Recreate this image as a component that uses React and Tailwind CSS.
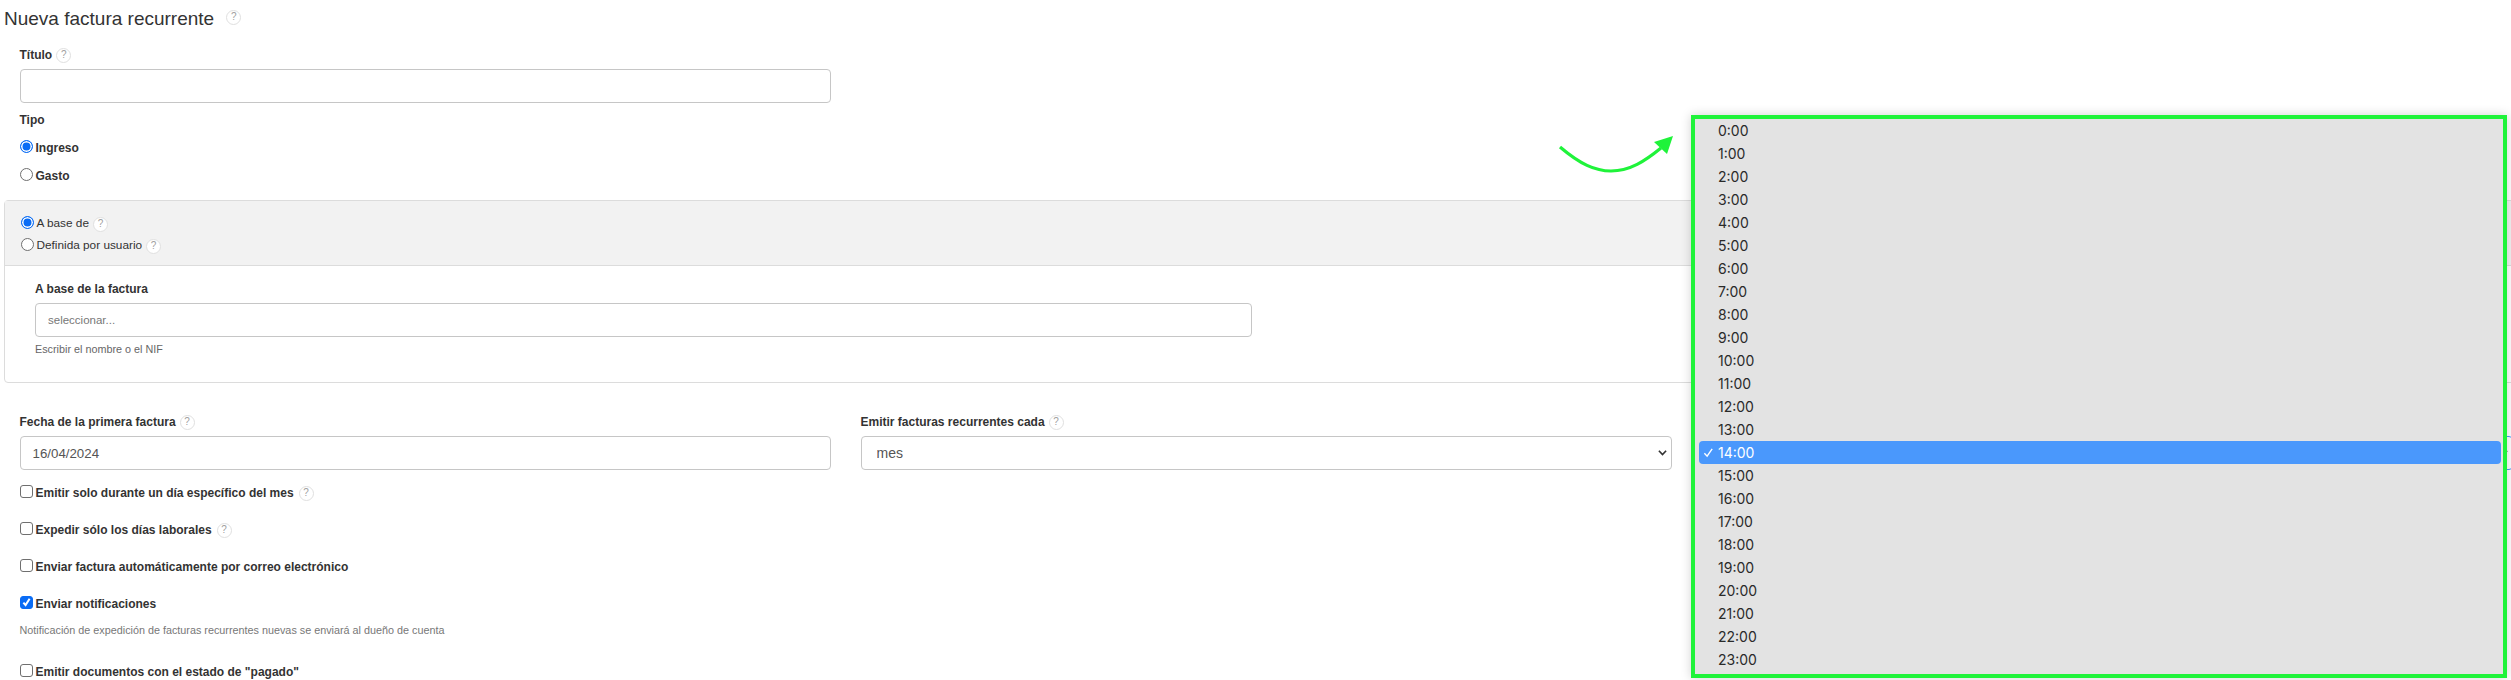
import React from "react";

const hours = Array.from({ length: 24 }, (_, i) => `${i}:00`);

function Help({ className = "" }) {
  return (
    <span className={`inline-flex w-[15px] h-[15px] shrink-0 items-center justify-center rounded-full border border-[#e0e0e0] bg-white text-[10px] leading-none font-normal text-[#a0a0a0] ${className}`}>?</span>
  );
}

function Radio({ checked, name, className = "" }) {
  return (
    <input
      type="radio"
      name={name}
      defaultChecked={checked}
      className={`appearance-none w-[13px] h-[13px] shrink-0 rounded-full border border-[#6f6f6f] bg-white checked:border-[#0a6cf5] checked:bg-[#0a6cf5] checked:shadow-[inset_0_0_0_1.5px_#fff] ${className}`}
    />
  );
}

function Check({ checked }) {
  return (
    <span className={`relative -mt-[4px] inline-flex w-[13px] h-[13px] shrink-0 items-center justify-center rounded-[3px] border ${checked ? "border-[#0a6cf5] bg-[#0a6cf5]" : "border-[#6f6f6f] bg-white"}`}>
      {checked && (
        <svg viewBox="0 0 12 12" className="w-[12px] h-[12px]" fill="none" stroke="#fff" strokeWidth="2.2">
          <path d="M2.6 6.6 L5 9.4 L9.4 2.4" />
        </svg>
      )}
    </span>
  );
}

function CheckRow({ label, help, checked, className = "" }) {
  return (
    <label className={`flex h-[18px] items-center text-[12px] font-bold text-[#333] ${className}`}>
      <Check checked={checked} />
      <span className="ml-[3px]">{label}</span>
      {help && <Help className="ml-[5px]" />}
    </label>
  );
}

function Field({ children, help }) {
  return (
    <label className="flex h-[18px] items-center gap-[4px] text-[12px] font-bold text-[#333]">
      {children}
      {help && <Help />}
    </label>
  );
}

const inputCls = "block w-full h-[34px] rounded-[4px] border border-[#c6c6c6] bg-white px-[12px] text-[13.3px] text-[#555] outline-none";

function Chevron({ color = "#333" }) {
  return (
    <svg viewBox="0 0 10 8" className="absolute right-[5px] top-[13px] w-[9px] h-[8px]" fill="none" stroke={color} strokeWidth="1.8">
      <path d="M1 1.5 L5 5.8 L9 1.5" />
    </svg>
  );
}

export default function App() {
  return (
    <div className="relative w-[2511px] h-[680px] overflow-hidden bg-white font-['Liberation_Sans',Arial,sans-serif] text-[#333]">
      <div className="w-[2526px] pl-[4px]">
        <h1 className="flex h-[38px] items-center text-[19px] font-normal text-[#333]">
          Nueva factura recurrente
          <Help className="ml-[12px] -mt-[4px]" />
        </h1>

        <div className="pl-[15.5px] pr-[1695.5px]">
          <div className="pt-[8px]">
            <Field help>Título</Field>
            <input className={`${inputCls} mt-[5px]`} />
          </div>
          <div className="pt-[8px]">
            <Field>Tipo</Field>
            <label className="mt-[10px] flex h-[18px] items-center gap-[3px] text-[12px] font-bold">
              <Radio name="tipo" checked className="-mt-[4px]" />
              Ingreso
            </label>
            <label className="mt-[10px] flex h-[18px] items-center gap-[3px] text-[12px] font-bold">
              <Radio name="tipo" className="-mt-[4px]" />
              Gasto
            </label>
          </div>
        </div>

        <div className="mt-[15px] h-[183px] rounded-[4px] border border-[#dcdcdc]">
          <div className="h-[65px] border-b border-[#dcdcdc] bg-[#f2f2f2] pl-[15.5px] pt-[12px]">
            <label className="flex h-[22px] items-center gap-[3px] text-[11.8px]">
              <Radio name="base" checked className="-mt-[4px]" />
              A base de
              <Help className="ml-[1px]" />
            </label>
            <label className="flex h-[22px] items-center gap-[3px] text-[11.8px]">
              <Radio name="base" className="-mt-[4px]" />
              Definida por usuario
              <Help className="ml-[1px]" />
            </label>
          </div>
          <div className="pl-[30px] pt-[14px]">
            <Field>A base de la factura</Field>
            <input placeholder="seleccionar..." className={`${inputCls} mt-[5px] !w-[1217px] !text-[11.5px] placeholder:text-[#777]`} />
            <p className="mt-[5px] h-[14px] text-[10.8px] leading-[14px] text-[#666]">Escribir el nombre o el NIF</p>
          </div>
        </div>

        <div className="mt-[30px] grid grid-cols-[811px_811px_811px] gap-x-[30px] pl-[15.5px]">
          <div>
            <Field help>Fecha de la primera factura</Field>
            <input defaultValue="16/04/2024" className={`${inputCls} mt-[5px]`} />
          </div>
          <div>
            <Field help>Emitir facturas recurrentes cada</Field>
            <div className="relative mt-[5px]">
              <select className={`${inputCls} appearance-none px-[15px] !text-[14px]`} defaultValue="mes">
                <option>mes</option>
              </select>
              <Chevron />
            </div>
          </div>
          <div>
            <div className="h-[18px]" />
            <div className="relative mt-[5px]">
              <select className={`${inputCls} appearance-none !border-[#4a98fc]`}>
                <option>14:00</option>
              </select>
              <Chevron />
            </div>
          </div>
        </div>

        <div className="pl-[15.5px]">
          <CheckRow className="mt-[14px]" label="Emitir solo durante un día específico del mes" help />
          <CheckRow className="mt-[19px]" label="Expedir sólo los días laborales" help />
          <CheckRow className="mt-[19px]" label="Enviar factura automáticamente por correo electrónico" />
          <CheckRow className="mt-[19px]" label="Enviar notificaciones" checked />
          <p className="mt-[10px] h-[14px] text-[10.8px] leading-[14px] text-[#777]">Notificación de expedición de facturas recurrentes nuevas se enviará al dueño de cuenta</p>
          <CheckRow className="mt-[26px]" label={'Emitir documentos con el estado de "pagado"'} />
        </div>
      </div>

      {/* annotation arrow */}
      <svg className="absolute left-[1550px] top-[125px] w-[135px] h-[55px]" viewBox="1550 125 135 55" fill="none">
        <path d="M1560 147 C1580 164 1595 171 1611 171 C1630 171 1645 161 1661 148" stroke="#1ff33a" strokeWidth="3.2" />
        <path d="M1673 136 L1654 142 L1667 154 Z" fill="#1ff33a" />
      </svg>

      {/* native time menu, framed */}
      <ul className="absolute left-[1691px] top-[115px] w-[816px] h-[563px] border-[4px] border-[#1ff33a] bg-[#e3e3e3] pl-[4px] pr-[2px] font-['Inter',sans-serif] text-[14px] text-[#2a2a2a] shadow-[0_0_10px_rgba(0,0,0,0.18)]">
        {hours.map((h) => (
          <li
            key={h}
            className={`relative flex h-[23px] items-center rounded-[4px] pl-[19px] ${h === "14:00" ? "bg-[#4a98fc] text-white" : ""}`}
          >
            {h === "14:00" && (
              <svg viewBox="0 0 12 12" className="absolute left-[4px] top-[6px] w-[11px] h-[11px]" fill="none" stroke="#fff" strokeWidth="1.5">
                <path d="M1.5 6.8 L4.5 10 L10 2" />
              </svg>
            )}
            {h}
          </li>
        ))}
      </ul>
    </div>
  );
}
